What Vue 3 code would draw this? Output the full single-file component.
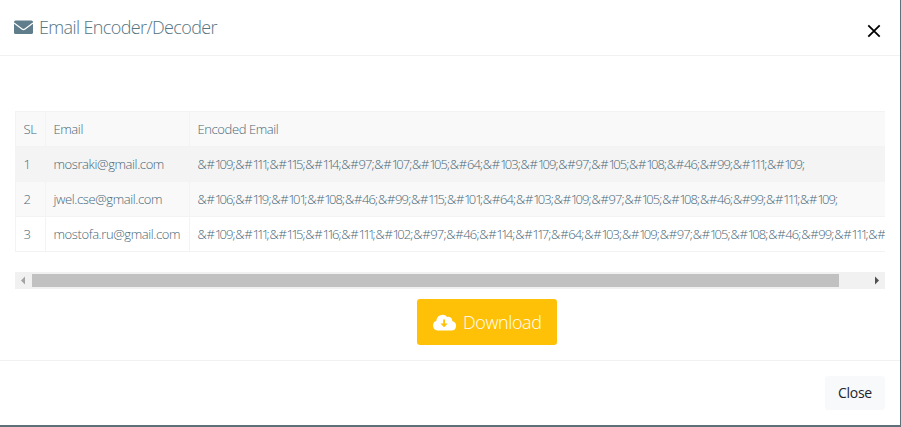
<script setup>
const rows = [
  { email: 'mosraki@gmail.com', cls: 'r1' },
  { email: 'jwel.cse@gmail.com', cls: 'r2' },
  { email: 'mostofa.ru@gmail.com', cls: 'r3' },
].map((row) => ({
  ...row,
  parts: [...row.email]
    .map((c) => `&#${c.charCodeAt(0)};`)
    .join('')
    .match(/1+|[02-9]+|\D+/g),
}))

const kind = (part) => (part[0] === '1' ? 'one' : /\d/.test(part) ? 'digit' : 'mark')
</script>

<template>
  <div class="modal">
    <header class="head">
      <svg class="mail" viewBox="0 0 19 14">
        <rect y="0.4" width="19" height="13.6" rx="1.6" fill="#607d8b" />
        <path d="M0 3 L8 9 Q9.5 10.1 11 9 L19 3" fill="none" stroke="#fff" stroke-width="1.2" />
      </svg>
      <h1>Email Encoder/Decoder</h1>
      <svg class="x" viewBox="0 0 14 14"><path d="M1.3 1.3 L12.7 12.7 M12.7 1.3 L1.3 12.7" stroke="#000" stroke-width="1.8" /></svg>
    </header>
    <main>
      <div class="scroller">
        <table>
          <thead>
            <tr><th class="sl">SL</th><th class="em">Email</th><th>Encoded Email</th></tr>
          </thead>
          <tbody>
            <tr v-for="(r, i) in rows" :key="i" :class="r.cls">
              <td>{{ i + 1 }}</td>
              <td>{{ r.email }}</td>
              <td><span v-for="(p, k) in r.parts" :key="k" :class="kind(p)">{{ p }}</span></td>
            </tr>
          </tbody>
        </table>
      </div>
      <div class="bar">
        <svg viewBox="0 0 17 17"><path d="M6 8.5 L10 4.5 V12.5 Z" fill="#a3a3a3" /></svg>
        <div class="track"><div class="thumb"></div></div>
        <svg viewBox="0 0 17 17"><path d="M11 8.5 L7 4.5 V12.5 Z" fill="#505050" /></svg>
      </div>
      <button class="download">
        <svg viewBox="0 0 24 17">
          <path d="M5.2 16.5 A5 5 0 0 1 3.4 6.8 A6.2 6.2 0 0 1 14.2 3 A4 4 0 0 1 19.3 7.2 A4.7 4.7 0 0 1 18.5 16.5 Z" fill="#fff" />
          <path d="M10.2 5.5 H12 V9.5 H14.8 L11.1 13.3 L7.4 9.5 H10.2 Z" fill="#ffc107" />
        </svg>
        <span>Download</span>
      </button>
    </main>
    <footer><button class="close">Close</button></footer>
  </div>
</template>

<style>
body { overflow: hidden; background: #fff; }
</style>
<style scoped>
* { box-sizing: border-box; }
.modal {
  width: 901px; height: 427px; display: flex; flex-direction: column;
  border-right: 1px solid #607078; border-bottom: 2px solid #607078;
  font-family: "Open Sans", "Noto Sans", sans-serif; font-weight: 300; color: #567482; background: #fff;
}
.head { height: 56px; flex: none; display: flex; align-items: flex-start; padding: 0 19px 0 14px; border-bottom: 1px solid #f0f1f2; }
.mail { width: 19px; height: 14px; margin-top: 20px; }
h1 { margin: 14px 0 0 6px; font-size: 18px; line-height: 26px; font-weight: 300; letter-spacing: -0.62px; flex: 1; white-space: nowrap; }
.x { width: 14px; height: 14px; margin-top: 24px; }
main { flex: 1; padding: 55px 15px 0; display: flex; flex-direction: column; min-height: 0; }
.scroller { overflow: hidden; height: 141px; flex: none; }
table { border-collapse: collapse; table-layout: fixed; width: 938px; font-size: 13px; line-height: 20px; white-space: nowrap; color: #486777; }
th, td { height: 35px; padding: 0 8px 0 7.5px; text-align: left; font-weight: 300; letter-spacing: -0.4px; border: 1px solid #f2f3f3; }
.sl { width: 30px; }
.em { width: 144px; }
th, .r2 td { background: #f9f9f9; }
.r1 td { background: #f4f4f4; border-color: #f4f4f4; }
.mark { letter-spacing: -0.27px; }
.digit { letter-spacing: -0.9px; }
.one { letter-spacing: -2.7px; }
.bar { display: flex; height: 17px; margin-top: 20px; background: #f1f1f1; flex: none; }
.bar svg { width: 17px; height: 17px; }
.track { flex: 1; padding: 2px 0; }
.thumb { width: 807px; height: 13px; background: #c1c1c1; }
button { font: inherit; border: 0; padding: 0; }
.download {
  align-self: center; margin: 10px 0 0 74px; width: 140px; height: 46px; flex: none;
  border-radius: 3px; background: #ffc107; color: #fff; display: flex; align-items: center; padding-left: 16px; gap: 6px;
  font-size: 18px; letter-spacing: -0.6px;
}
.download span { letter-spacing: -0.4px; }
.download svg { width: 24px; height: 17px; }
footer { height: 65px; flex: none; border-top: 1px solid #f0f1f2; display: flex; justify-content: flex-end; padding: 15px 15px 0; }
.close { width: 60px; height: 34px; padding-bottom: 1px; border-radius: 3px; background: #f8f9fa; color: #212529; font-size: 14px; font-weight: 400; letter-spacing: -0.3px; }
</style>
